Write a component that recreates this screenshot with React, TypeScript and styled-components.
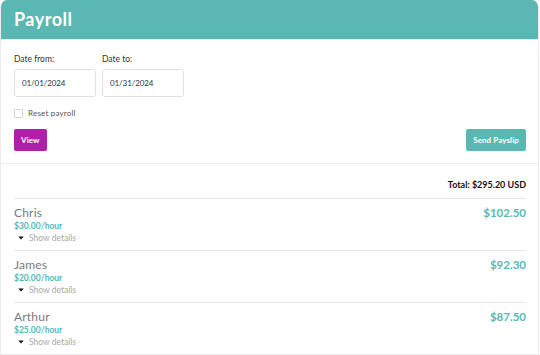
import styled, { createGlobalStyle } from 'styled-components';

const GlobalStyle = createGlobalStyle`
  html, body {
    margin: 0;
    padding: 0;
    background: #ffffff;
  }
  body {
    font-family: 'Lato', 'Open Sans', sans-serif;
  }
  * {
    box-sizing: border-box;
  }
`;

type Employee = {
  name: string;
  rate: string;
  amount: string;
};

const employees: Employee[] = [
  { name: 'Chris', rate: '$30.00/hour', amount: '$102.50' },
  { name: 'James', rate: '$20.00/hour', amount: '$92.30' },
  { name: 'Arthur', rate: '$25.00/hour', amount: '$87.50' },
];

const App = () => {
  return (
    <>
      <GlobalStyle />
      <SCard>
        <SHeader>
          <STitle>Payroll</STitle>
        </SHeader>

        <SForm>
          <SDates>
            <SField>
              <SLabel>Date from:</SLabel>
              <SInput type='text' defaultValue='01/01/2024' readOnly />
            </SField>
            <SField>
              <SLabel>Date to:</SLabel>
              <SInput type='text' defaultValue='01/31/2024' readOnly />
            </SField>
          </SDates>

          <SCheckRow>
            <SCheckbox />
            <SCheckLabel>Reset payroll</SCheckLabel>
          </SCheckRow>

          <SActions>
            <SButton $variant='purple'>View</SButton>
            <SButton $variant='teal'>Send Payslip</SButton>
          </SActions>
        </SForm>

        <SList>
          <STotal>Total: $295.20 USD</STotal>
          {employees.map((employee) => (
            <SRow key={employee.name}>
              <SRowInfo>
                <SName>{employee.name}</SName>
                <SRate>{employee.rate}</SRate>
                <SDetails>
                  <SCaret viewBox='0 0 10 6'>
                    <path d='M0.5 0.5 L9.5 0.5 L5 5.5 Z' fill='#111' />
                  </SCaret>
                  Show details
                </SDetails>
              </SRowInfo>
              <SAmount>{employee.amount}</SAmount>
            </SRow>
          ))}
        </SList>
      </SCard>
    </>
  );
};

export default App;

const SCard = styled.div`
  width: 539px;
  height: 355px;
  border: 1px solid #ececec;
  border-top: none;
  border-radius: 7px 7px 0 0;
  overflow: hidden;
  background: #ffffff;
`;

const SHeader = styled.div`
  height: 40px;
  background-color: #5ab7b1;
  display: flex;
  align-items: center;
  padding: 0 13px;
  border-bottom: 1px solid #e4f2f1;
`;

const STitle = styled.h1`
  margin: 0;
  color: #ffffff;
  font-size: 18px;
  font-weight: 700;
  letter-spacing: 0.5px;
  padding-bottom: 1px;
`;

const SForm = styled.div`
  display: flex;
  flex-direction: column;
  padding: 13px 12px 12px 13px;
  border-bottom: 1px solid #eeeeee;
`;

const SDates = styled.div`
  display: flex;
  gap: 6px;
`;

const SField = styled.div`
  display: flex;
  flex-direction: column;
  gap: 4px;
`;

const SLabel = styled.label`
  font-size: 8.5px;
  color: #333333;
  line-height: 12px;
`;

const SInput = styled.input`
  width: 82px;
  height: 28px;
  border: 1px solid #e2e2e2;
  border-radius: 3px;
  padding: 0 7px;
  font-family: inherit;
  font-size: 8px;
  letter-spacing: -0.1px;
  color: #333333;
  outline: none;
`;

const SCheckRow = styled.div`
  display: flex;
  align-items: center;
  gap: 5px;
  margin-top: 11px;
`;

const SCheckbox = styled.span`
  width: 9px;
  height: 9px;
  border: 1px solid #d6d6d6;
  border-radius: 1px;
`;

const SCheckLabel = styled.span`
  font-size: 8px;
  color: #555555;
  letter-spacing: 0.2px;
`;

const SActions = styled.div`
  display: flex;
  justify-content: space-between;
  margin-top: 11px;
`;

const SButton = styled.button<{ $variant: 'purple' | 'teal' }>`
  height: 22px;
  border: none;
  border-radius: 2px;
  padding: 0 7px;
  font-family: inherit;
  font-size: 8px;
  font-weight: 700;
  color: #ffffff;
  letter-spacing: 0.1px;
  background-color: ${({ $variant }) =>
    $variant === 'purple' ? '#b01fa9' : '#5ab7b1'};
`;

const SList = styled.div`
  display: flex;
  flex-direction: column;
  padding: 0 12px 0 13px;
`;

const STotal = styled.div`
  text-align: right;
  font-size: 9px;
  font-weight: 700;
  color: #111111;
  line-height: 11px;
  padding: 15px 0 8px;
  border-bottom: 1px solid #e6e6e6;
`;

const SRow = styled.div`
  display: flex;
  justify-content: space-between;
  align-items: flex-start;
  height: 52px;
  padding-top: 5px;
  border-bottom: 1px solid #e6e6e6;
`;

const SRowInfo = styled.div`
  display: flex;
  flex-direction: column;
`;

const SName = styled.div`
  font-size: 12px;
  color: #7a7a7a;
  line-height: 17px;
  letter-spacing: 0.2px;
`;

const SRate = styled.div`
  font-size: 8.5px;
  font-weight: 700;
  color: #4fbab1;
  line-height: 12px;
  margin-top: -1px;
`;

const SDetails = styled.div`
  display: flex;
  align-items: center;
  gap: 5px;
  padding-left: 4px;
  font-size: 8.5px;
  color: #a8a8a8;
  line-height: 12px;
`;

const SCaret = styled.svg`
  width: 6px;
  height: 4px;
`;

const SAmount = styled.div`
  font-size: 11.5px;
  font-weight: 700;
  color: #5ab7b1;
  line-height: 17px;
`;
